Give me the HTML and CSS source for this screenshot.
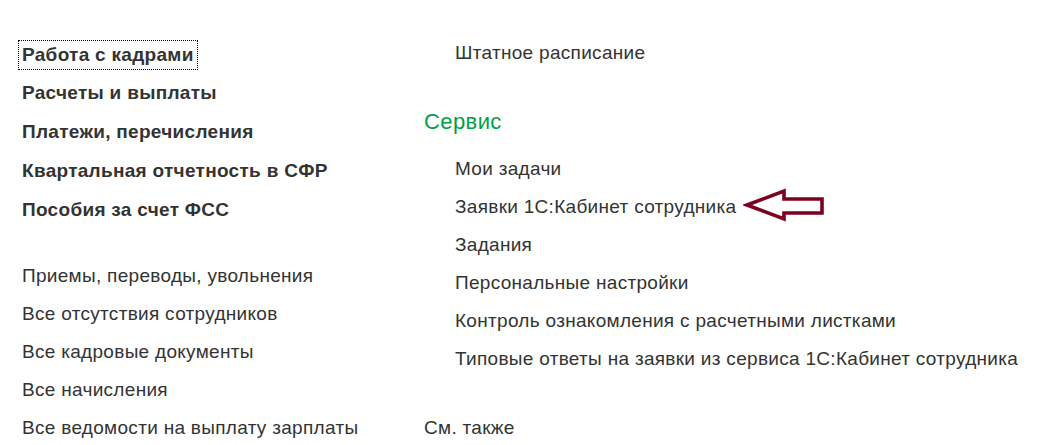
FILE: index.html
```html
<!DOCTYPE html>
<html lang="ru">
<head>
<meta charset="utf-8">
<title>Работа с кадрами</title>
<link rel="stylesheet" href="styles.css">
</head>
<body>
<div class="page">
  <div class="col left">
    <div class="group bold">
      <div class="item"><span class="focus">Работа с кадрами</span></div>
      <div class="item">Расчеты и выплаты</div>
      <div class="item">Платежи, перечисления</div>
      <div class="item">Квартальная отчетность в СФР</div>
      <div class="item">Пособия за счет ФСС</div>
    </div>
    <div class="group regular">
      <div class="item">Приемы, переводы, увольнения</div>
      <div class="item">Все отсутствия сотрудников</div>
      <div class="item">Все кадровые документы</div>
      <div class="item">Все начисления</div>
      <div class="item">Все ведомости на выплату зарплаты</div>
    </div>
  </div>
  <div class="col right">
    <div class="sub first">Штатное расписание</div>
    <div class="heading">Сервис</div>
    <div class="sub after-heading">Мои задачи</div>
    <div class="sub">Заявки 1С:Кабинет сотрудника<svg class="arrow" width="84" height="38" viewBox="0 0 84 38" aria-hidden="true"><path d="M4 19 L41 5 L41 13 L79 13 L79 27 L41 27 L41 33 Z" fill="none" stroke="#7d0020" stroke-width="3.6" stroke-linejoin="miter"/></svg></div>
    <div class="sub">Задания</div>
    <div class="sub">Персональные настройки</div>
    <div class="sub">Контроль ознакомления с расчетными листками</div>
    <div class="sub">Типовые ответы на заявки из сервиса 1С:Кабинет сотрудника</div>
    <div class="see">См. также</div>
  </div>
</div>
</body>
</html>
```

FILE: styles.css
```css
html, body {
  margin: 0;
  padding: 0;
  background: #ffffff;
}

body {
  font-family: "Liberation Sans", Arial, sans-serif;
  font-size: 19px;
  letter-spacing: 0.3px;
  color: #333333;
}

.page {
  display: flex;
  padding-top: 34px;
}

.left {
  width: 424px;
  flex: none;
  padding-left: 22px;
  box-sizing: border-box;
}

.bold .item {
  font-weight: bold;
  line-height: 39px;
  height: 39px;
  white-space: nowrap;
}

.focus {
  display: inline-block;
  line-height: 28px;
  border: 1px dotted #000000;
  padding: 0 3px;
  margin-left: -4px;
  vertical-align: middle;
}

.regular {
  margin-top: 28px;
}

.regular .item {
  line-height: 38px;
  height: 38px;
  white-space: nowrap;
}

.right {
  flex: 1;
}

.sub {
  padding-left: 31px;
  line-height: 38px;
  height: 38px;
  white-space: nowrap;
}

.heading {
  margin-top: 31px;
  font-size: 22px;
  letter-spacing: 0.4px;
  color: #00a04a;
  line-height: 38px;
  height: 38px;
}

.after-heading {
  margin-top: 9px;
}

.see {
  margin-top: 31px;
  line-height: 38px;
  height: 38px;
}

.arrow {
  display: inline-block;
  vertical-align: middle;
  margin-left: 7px;
  margin-top: -6px;
}
```
